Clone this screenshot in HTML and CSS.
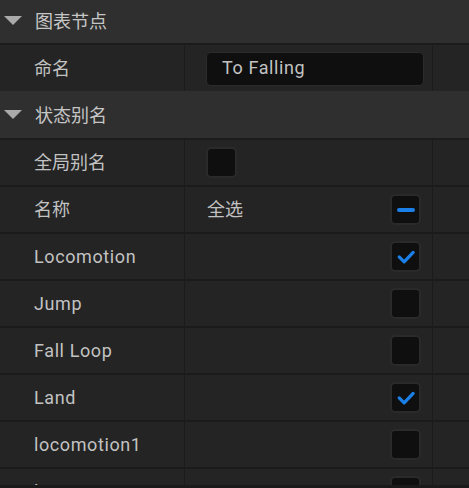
FILE: index.html
```html
<!DOCTYPE html>
<html>
<head>
<meta charset="utf-8">
<link rel="stylesheet" href="styles.css">
</head>
<body>
<div class="panel">
  <div class="header h1">
    <span class="tri"></span><span class="htext">图表节点</span>
  </div>
  <div class="row r-name">
    <div class="c-label cjk">命名</div>
    <div class="c-value"><div class="input">To Falling</div></div>
    <div class="c-extra"></div>
  </div>
  <div class="header h2">
    <span class="tri"></span><span class="htext">状态别名</span>
  </div>
  <div class="row">
    <div class="c-label cjk">全局别名</div>
    <div class="c-value"><span class="cb"></span></div>
    <div class="c-extra"></div>
  </div>
  <div class="row">
    <div class="c-label cjk">名称</div>
    <div class="c-value spread"><span class="vtext cjk">全选</span><span class="cb"><span class="minus"></span></span></div>
    <div class="c-extra"></div>
  </div>
  <div class="row">
    <div class="c-label">Locomotion</div>
    <div class="c-value end"><span class="cb"><svg class="chk" viewBox="0 0 30 30"><path d="M8 15.5 L13.5 21 L23.5 10.5" fill="none" stroke="#1a7fe6" stroke-width="3.6" stroke-linecap="round" stroke-linejoin="round"/></svg></span></div>
    <div class="c-extra"></div>
  </div>
  <div class="row">
    <div class="c-label">Jump</div>
    <div class="c-value end"><span class="cb"></span></div>
    <div class="c-extra"></div>
  </div>
  <div class="row">
    <div class="c-label">Fall Loop</div>
    <div class="c-value end"><span class="cb"></span></div>
    <div class="c-extra"></div>
  </div>
  <div class="row">
    <div class="c-label">Land</div>
    <div class="c-value end"><span class="cb"><svg class="chk" viewBox="0 0 30 30"><path d="M8 15.5 L13.5 21 L23.5 10.5" fill="none" stroke="#1a7fe6" stroke-width="3.6" stroke-linecap="round" stroke-linejoin="round"/></svg></span></div>
    <div class="c-extra"></div>
  </div>
  <div class="row">
    <div class="c-label">locomotion1</div>
    <div class="c-value end"><span class="cb"></span></div>
    <div class="c-extra"></div>
  </div>
  <div class="row">
    <div class="c-label">locomotion2</div>
    <div class="c-value end"><span class="cb"></span></div>
    <div class="c-extra"></div>
  </div>
</div>
</body>
</html>
```
FILE: styles.css
```css
html, body {
  margin: 0;
  padding: 0;
  background: #1a1a1a;
}
body {
  width: 469px;
  height: 488px;
  overflow: hidden;
  font-family: Roboto, "Noto Sans CJK SC", sans-serif;
  font-size: 18px;
  color: #c2c2c2;
  letter-spacing: 0.6px;
}
.panel {
  height: 485px;
  overflow: hidden;
  background: #242424;
}
.header {
  display: flex;
  align-items: center;
  background: #2f2f2f;
  border-bottom: 2px solid #1b1b1b;
  box-sizing: border-box;
}
.h1 { height: 45px; padding-bottom: 4px; }
.h2 { height: 49px; padding-bottom: 2px; }
.tri {
  width: 0;
  height: 0;
  margin-left: 4px;
  margin-right: 13px;
  margin-top: 2px;
  border-left: 9px solid transparent;
  border-right: 9px solid transparent;
  border-top: 9px solid #aaaaaa;
}
.htext {
  font-family: "Noto Sans CJK SC", sans-serif;
  letter-spacing: 0;
  color: #c6c6c6;
  line-height: 20px;
}
.cjk {
  font-family: "Noto Sans CJK SC", sans-serif;
  letter-spacing: 0;
  line-height: 20px;
  padding-bottom: 3px;
}
.row {
  display: flex;
  height: 47px;
  box-sizing: border-box;
  border-bottom: 2px solid #1b1b1b;
}
.row.r-name {
  height: 46px;
  border-bottom: none;
}
.c-label {
  width: 185px;
  box-sizing: border-box;
  padding-left: 34px;
  display: flex;
  align-items: center;
  border-right: 1px solid #1b1b1b;
}
.c-value {
  width: 248px;
  box-sizing: border-box;
  padding-left: 21px;
  padding-right: 11px;
  display: flex;
  align-items: center;
  border-right: 1px solid #1b1b1b;
}
.c-value.spread { justify-content: space-between; }
.c-value.end { justify-content: flex-end; }
.c-extra { flex: 1; }
.vtext { padding-left: 1px; }
.input {
  flex: none;
  width: 218px;
  height: 34px;
  box-sizing: border-box;
  background: #0f0f0f;
  border: 1.5px solid #2b2b2b;
  border-radius: 5px;
  padding-left: 15px;
  padding-bottom: 2px;
  display: flex;
  align-items: center;
  margin-top: 1px;
}
.cb {
  flex: none;
  width: 31px;
  height: 31px;
  box-sizing: border-box;
  background: #0f0f0f;
  border: 2px solid #2a2a2a;
  border-radius: 5px;
  display: flex;
  align-items: center;
  justify-content: center;
  position: relative;
}
.minus {
  width: 18px;
  height: 4px;
  border-radius: 2px;
  background: #1a7fe6;
}
.chk {
  width: 27px;
  height: 27px;
}
```
